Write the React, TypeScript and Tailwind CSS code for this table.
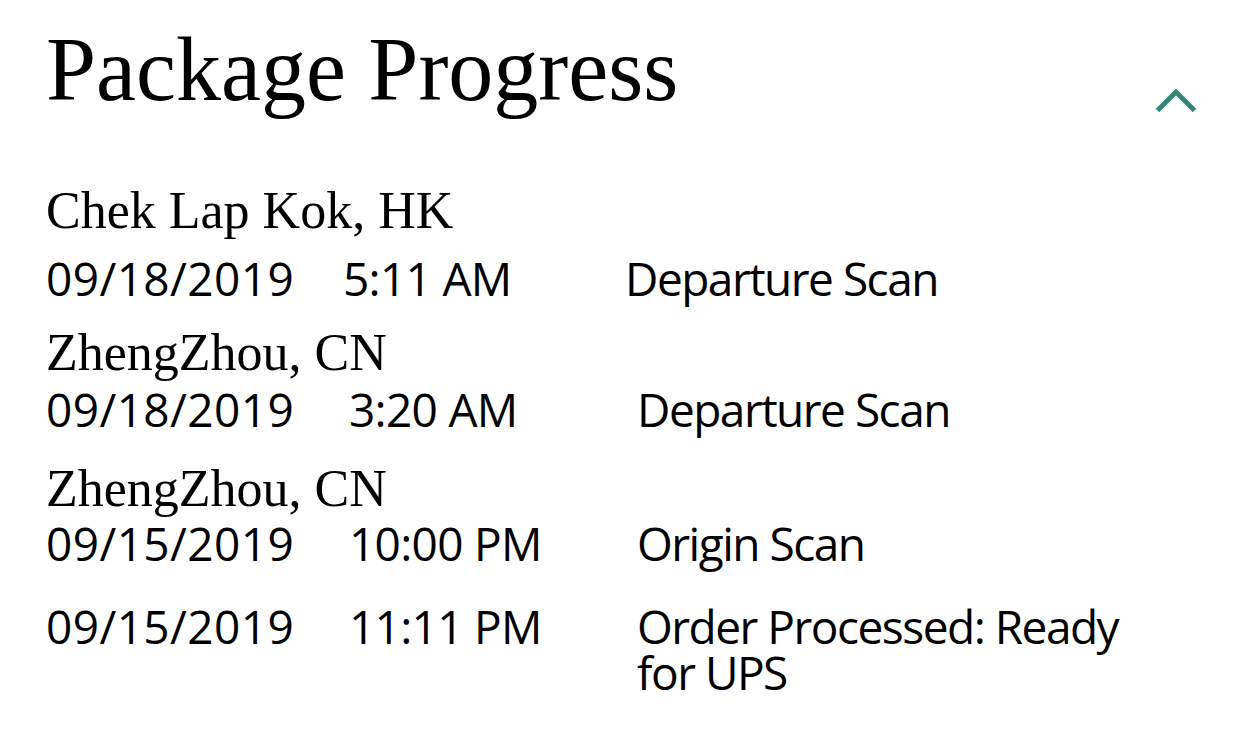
const serif = "font-['Liberation_Serif','Times_New_Roman',serif]";
const sans = "font-['Open_Sans','Noto_Sans',sans-serif]";

type Scan = {
  date: string;
  time: string;
  activity: string;
  cols: string;
  mt: string;
};

function ScanRow({ date, time, activity, cols, mt }: Scan) {
  return (
    <div className={`grid ${cols} ${mt} ${sans} text-[46px] leading-[46px] font-normal text-black`}>
      <span className="tracking-[0.4px]">{date}</span>
      <span className="tracking-[-0.7px]">{time}</span>
      <span className="tracking-[-1.5px]">{activity}</span>
    </div>
  );
}

function Location({ name, mt }: { name: string; mt: string }) {
  return (
    <div className={`${mt} ${serif} text-[52px] leading-[52px] text-black`}>
      {name}
    </div>
  );
}

export default function App() {
  return (
    <div className="min-h-[750px] w-[1242px] bg-white pl-[46px]">
      <div className="flex items-start justify-between pt-[25px] pr-[45px]">
        <h1 className={`${serif} text-[90px] leading-[90px] font-normal text-black`}>
          Package Progress
        </h1>
        <svg
          className="mt-[64px]"
          width="42"
          height="24"
          viewBox="0 0 42 24"
          fill="none"
          stroke="#36877a"
          strokeWidth="5"
        >
          <path d="M2.5 21.5 21 3l18.5 18.5" />
        </svg>
      </div>

      <Location name="Chek Lap Kok, HK" mt="mt-[70px]" />
      <ScanRow
        date="09/18/2019"
        time="5:11 AM"
        activity="Departure Scan"
        cols="grid-cols-[297px_282px_520px]"
        mt="mt-[18px]"
      />

      <Location name="ZhengZhou, CN" mt="mt-[26px]" />
      <ScanRow
        date="09/18/2019"
        time="3:20 AM"
        activity="Departure Scan"
        cols="grid-cols-[303px_288px_520px]"
        mt="mt-[7px]"
      />

      <Location name="ZhengZhou, CN" mt="mt-[31px]" />
      <ScanRow
        date="09/15/2019"
        time="10:00 PM"
        activity="Origin Scan"
        cols="grid-cols-[303px_288px_520px]"
        mt="mt-[5px]"
      />

      <ScanRow
        date="09/15/2019"
        time="11:11 PM"
        activity="Order Processed: Ready for UPS"
        cols="grid-cols-[303px_288px_520px]"
        mt="mt-[37px]"
      />
    </div>
  );
}
